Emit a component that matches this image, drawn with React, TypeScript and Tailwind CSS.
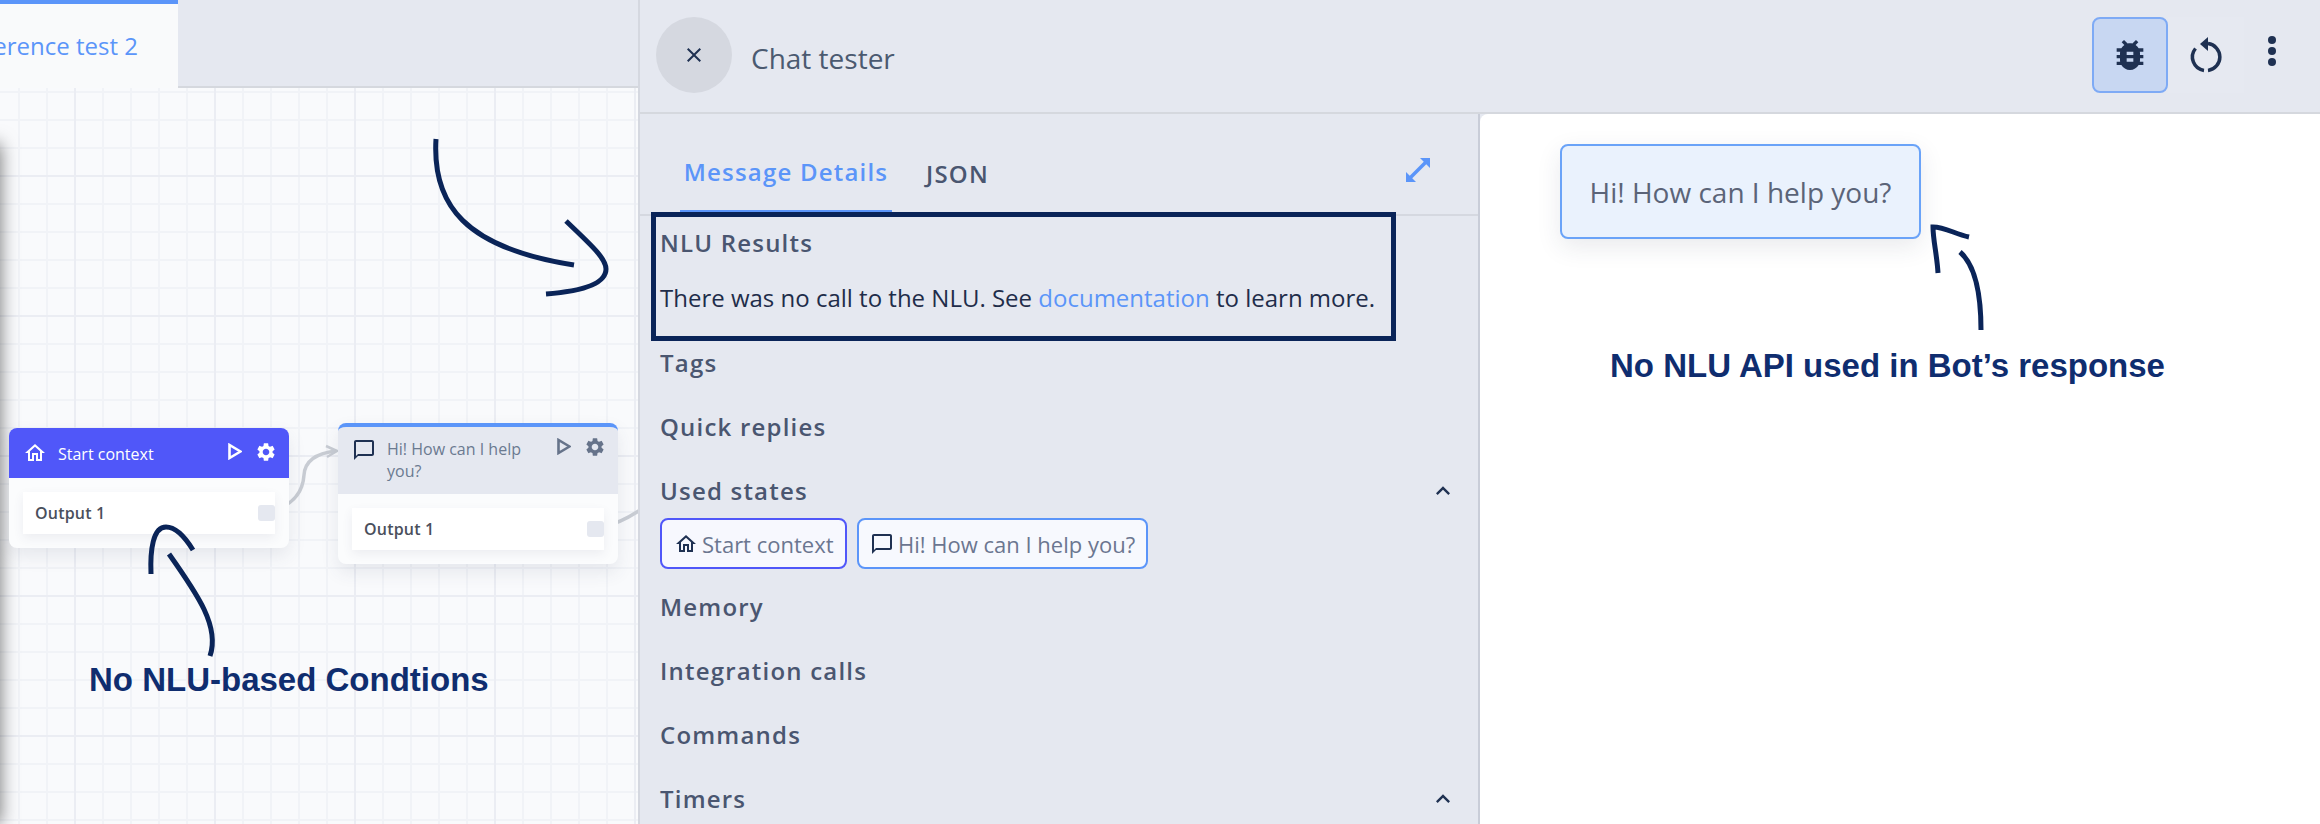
import { MdBugReport, MdChatBubbleOutline, MdClose, MdKeyboardArrowUp, MdOutlineHome, MdSettings } from "react-icons/md";

const font = "font-['Open_Sans','Noto_Sans',sans-serif]";

function PlayIcon({ className }: { className: string }) {
  return (
    <svg viewBox="0 0 14 16" className={className} fill="none" stroke="currentColor" strokeWidth="2.6">
      <path d="M1.5 1.5v13L12.5 8z" />
    </svg>
  );
}

function Node(props: {
  className: string;
  header: string;
  tint: string;
  icon: React.ReactNode;
  title: React.ReactNode;
  actions: string;
}) {
  return (
    <div className={`absolute w-[280px] rounded-lg bg-[#fbfcfd] shadow-[0_8px_18px_rgba(60,70,100,0.1)] ${props.className}`}>
      <div className={`flex rounded-t-lg ${props.header}`}>
        <div className="flex w-[38px] shrink-0 justify-end">{props.icon}</div>
        <div className={`ml-[11px] w-[170px] text-[16px] leading-[22px] ${props.tint}`}>{props.title}</div>
        <div className={`flex flex-1 gap-[13px] ${props.actions}`}>
          <PlayIcon className="h-[17px] w-[14px]" />
          <MdSettings className="h-[22px] w-[22px] -mt-[2px]" />
        </div>
      </div>
      <div className="p-[14px]">
        <div className="relative flex h-[42px] items-center bg-white pl-3 text-[16px] font-[550] tracking-[0.2px] text-[#4a4f5c] shadow-[0_4px_10px_rgba(60,70,100,0.08)]">
          Output 1
          <div className="absolute right-0 top-[13px] h-4 w-[17px] rounded-[3px] bg-[#e5e8f0]" />
        </div>
      </div>
    </div>
  );
}

function Row({ label, open }: { label: string; open?: boolean }) {
  return (
    <div className="flex h-16 shrink-0 items-center justify-between pb-[2px] pl-5 pr-[21px] text-[24px] font-[550] tracking-[1.2px] text-[#4a5670]">
      {label}
      {open && <MdKeyboardArrowUp className="h-7 w-7 text-[#1f3152]" />}
    </div>
  );
}

export default function App() {
  return (
    <div className={`relative flex h-[824px] w-[2320px] overflow-hidden bg-[#e5e8f0] ${font}`}>
      <div className="flex w-[640px] shrink-0 flex-col border-r-2 border-[#d5d8e0]">
        <div className="flex h-[88px] shrink-0 border-b-2 border-[#d5d8de]">
          <div className="-mb-[2px] flex w-[178px] shrink-0 items-center justify-end overflow-hidden border-t-4 border-[#5b95f9] bg-[#f9fafb] pr-10 whitespace-nowrap text-[24px] text-[#5b95f9]">
            Inference test 2
          </div>
        </div>
        <div className="relative flex-1 overflow-hidden bg-[#f9fafc] bg-[linear-gradient(to_right,#ebedf3_2px,transparent_2px),linear-gradient(to_bottom,#ebedf3_2px,transparent_2px),linear-gradient(to_right,#f1f3f7_2px,transparent_2px),linear-gradient(to_bottom,#f1f3f7_2px,transparent_2px)] bg-[size:140px_140px,140px_140px,28px_28px,28px_28px] bg-[position:74px_87px,74px_87px,18px_3px,18px_3px]">
          <div className="absolute -left-5 bottom-0 top-[56px] w-5 bg-white shadow-[0_0_18px_rgba(0,0,0,0.55)]" />

          <svg className="absolute inset-0 h-full w-full" fill="none" stroke="#c8ccd3" strokeWidth="3.5">
            <path d="M275 422C296 415 303 402 304 387C305 372 318 365 336 363" />
            <path d="M326 358L337 363L327 369" strokeWidth="2.5" />
            <path d="M603 439C615 436 628 430 640 422" />
          </svg>

          <Node
            className="left-[9px] top-[340px]"
            header="h-[50px] bg-[#5057f9] pt-[15px]"
            tint="text-white"
            icon={<MdOutlineHome className="h-[24px] w-[24px] -mt-[2px] text-white" />}
            title="Start context"
            actions="text-white"
          />
          <Node
            className="left-[338px] top-[335px]"
            header="h-[71px] border-t-4 border-[#5b95f9] bg-[#e5e8f0] pt-[11px]"
            tint="text-[#6b7a90]"
            icon={<MdChatBubbleOutline className="h-[24px] w-[24px] text-[#1f3152]" />}
            title="Hi! How can I help you?"
            actions="text-[#66738a]"
          />
        </div>
      </div>

      <div className="flex min-w-0 flex-1 flex-col">
        <div className="flex h-[114px] shrink-0 items-center border-b-2 border-[#d5d8de] pb-[2px] pl-4 pr-[44px]">
          <button className="flex h-[76px] w-[76px] items-center justify-center rounded-full bg-[#d5d8e0] text-[#1f3152]">
            <MdClose className="h-6 w-6" />
          </button>
          <div className="ml-[19px] mt-[6px] text-[28px] text-[#4b5a70]">Chat tester</div>
          <button className="ml-auto flex h-[76px] w-[76px] items-center justify-center rounded-lg border-2 border-[#7eaaf5] bg-[#c8d7f2] text-[#1f3152]">
            <MdBugReport className="h-10 w-10" />
          </button>
          <button className="flex h-[76px] w-[76px] items-center justify-center bg-[#e6e9f1]">
            <svg viewBox="0 0 76 76" className="h-[76px] w-[76px] text-[#1f3152]" fill="none" stroke="currentColor" strokeWidth="3.5">
              <path d="M40 26.6A13.5 13.5 0 0 1 40 53.4" />
              <path d="M36 53.4A13.5 13.5 0 0 1 27.5 31.5" />
              <path d="M32 27L40 20V34Z" fill="currentColor" stroke="none" />
            </svg>
          </button>
          <div className="ml-[24px] -mt-2 flex w-2 flex-col gap-[3px]">
            <span className="h-2 w-2 rounded-full bg-[#1f3152]" />
            <span className="h-2 w-2 rounded-full bg-[#1f3152]" />
            <span className="h-2 w-2 rounded-full bg-[#1f3152]" />
          </div>
        </div>

        <div className="flex min-h-0 flex-1">
          <div className="flex w-[840px] shrink-0 flex-col border-r-2 border-[#c9cdd8]">
            <div className="flex h-[102px] shrink-0 items-end justify-between border-b-2 border-[#d5d8e0] pl-10">
              <div className="flex text-[24px] font-[550] tracking-[1.2px]">
                <div className="-mb-[2px] flex h-[68px] w-[212px] items-center justify-center border-b-4 border-[#5b95f9] pb-3 text-[#5b95f9]">
                  Message Details
                </div>
                <div className="ml-[34px] flex h-[68px] items-center pb-3 text-[#4a5670]">JSON</div>
              </div>
              <svg viewBox="0 0 24 24" className="mb-[32px] mr-[48px] h-6 w-6 text-[#5b95f9]" fill="currentColor">
                <path d="M14 0H24V10Z" />
                <path d="M0 24V14L10 24Z" />
                <path d="M3.5 20.5L20.5 3.5" stroke="currentColor" strokeWidth="3.5" />
              </svg>
            </div>

            <div className="flex h-14 shrink-0 items-center pb-[2px] pl-5 text-[24px] font-[550] tracking-[1.2px] text-[#4a5670]">NLU Results</div>
            <div className="h-[60px] shrink-0 pl-5 pt-[11px] text-[24px] leading-[30px] text-[#1f2d4a]">
              There was no call to the NLU. See <span className="text-[#5b95f9]">documentation</span> to learn more.
            </div>

            <Row label="Tags" />
            <Row label="Quick replies" />
            <div className="-mb-[6px]"><Row label="Used states" open /></div>
            <div className="flex shrink-0 gap-[10px] pl-5 pb-[7px] text-[22px] text-[#6b7690]">
              <div className="flex h-[51px] w-[187px] items-center gap-[4px] rounded-lg border-2 border-[#5057f9] bg-[#f7f8fe] pl-[12px]">
                <MdOutlineHome className="h-[24px] w-[24px] text-[#1f3152]" />
                <span className="mt-[2px]">Start context</span>
              </div>
              <div className="flex h-[51px] w-[291px] items-center gap-[4px] rounded-lg border-2 border-[#5b95f9] bg-[#f7f9fe] pl-[11px]">
                <MdChatBubbleOutline className="h-[24px] w-[24px] text-[#1f3152]" />
                <span className="mt-[2px]">Hi! How can I help you?</span>
              </div>
            </div>
            <Row label="Memory" />
            <Row label="Integration calls" />
            <Row label="Commands" />
            <Row label="Timers" open />
          </div>

          <div className="flex-1 rounded-tl-lg bg-white pl-20 pt-[30px]">
            <div className="flex h-[95px] w-[361px] items-center justify-center rounded-lg border-2 border-[#6aa3f8] bg-[#eaf2fd] text-[28px] text-[#5b6478] shadow-[0_8px_24px_rgba(40,50,80,0.1)]">
              Hi! How can I help you?
            </div>
          </div>
        </div>
      </div>

      {/* hand drawn notes pasted on top of the screenshot */}
      <svg className="pointer-events-none absolute inset-0 h-full w-full" fill="none" stroke="#0a2458" strokeWidth="5">
        <path d="M436 139C432 205 465 248 574 265" />
        <path d="M566 221C590 244 606 258 606 269C606 283 585 291 546 294" />
        <path d="M151 574C150 550 153 527 166 527C176 527 185 537 193 550" />
        <path d="M169 554C198 595 220 627 210 656" />
        <path d="M1938 273C1937 255 1933 240 1933 227C1945 227 1955 234 1969 237" />
        <path d="M1960 252C1975 265 1981 295 1981 330" />
      </svg>
      <div className="absolute left-[651px] top-[212px] h-[129px] w-[745px] border-[5px] border-[#0a2458]" />
      <div className="absolute left-[89px] top-[660px] whitespace-nowrap font-['Liberation_Sans',sans-serif] text-[33px] font-bold leading-[40px] text-[#0f2d6f]">
        No NLU-based Condtions
      </div>
      <div className="absolute left-[1610px] top-[346px] whitespace-nowrap font-['Liberation_Sans',sans-serif] text-[33px] font-bold leading-[40px] text-[#0f2d6f]">
        No NLU API used in Bot’s response
      </div>
    </div>
  );
}
